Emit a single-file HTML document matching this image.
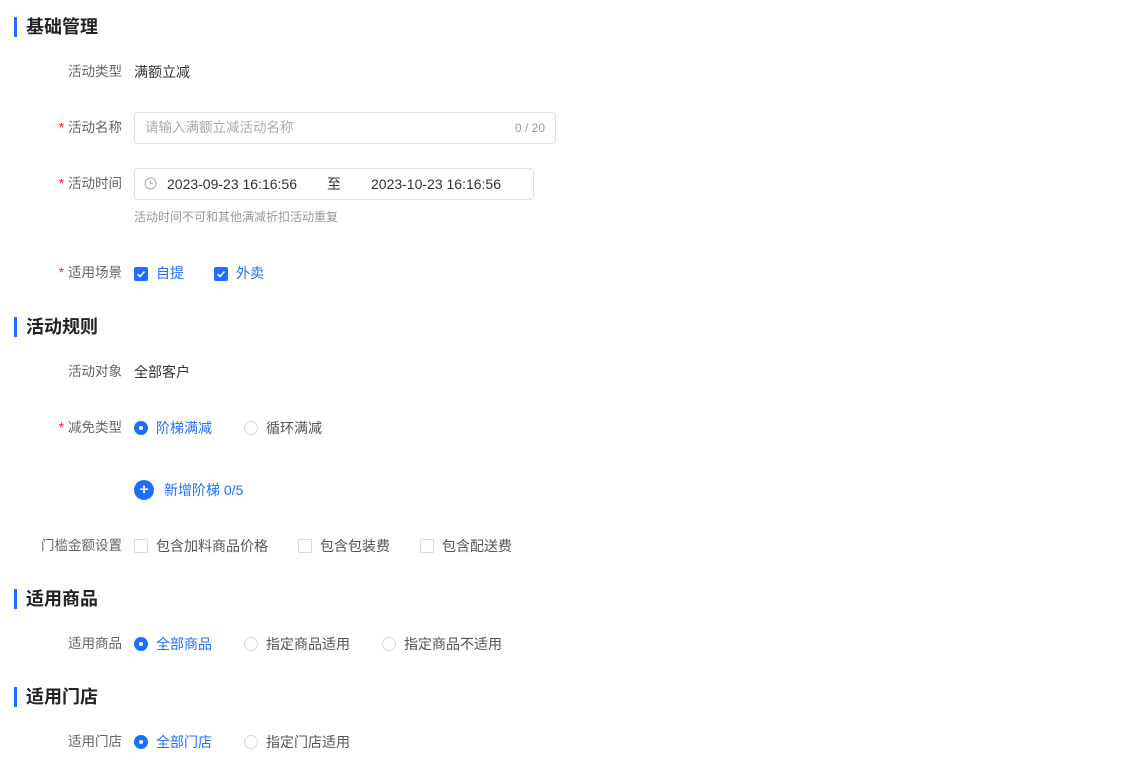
<!DOCTYPE html>
<html><head><meta charset="utf-8"><style>
*{margin:0;padding:0;box-sizing:border-box}
body{width:1127px;height:772px;background:#fff;position:relative;font-family:"Liberation Sans","Noto Sans CJK SC",sans-serif;font-size:14px;color:#333;overflow:hidden}
.a{position:absolute;white-space:nowrap;line-height:20px}
.h{position:absolute;left:14px;height:20px;border-left:3px solid #1e6fff;padding-left:9px;font-size:18px;font-weight:bold;line-height:20px;color:#222}
.l{position:absolute;right:1005px;color:#666;line-height:20px;white-space:nowrap;font-size:13.5px}
.l i{color:#f5222d;font-style:normal;margin-right:4px}
.box{position:absolute;border:1px solid #dcdfe6;border-radius:4px}
.cb{position:absolute;width:14px;height:14px;border:1px solid #d9d9d9;border-radius:2px;background:#fff}
.cb.on{background:#1e6fff;border-color:#1e6fff}
.rd{position:absolute;width:14px;height:14px;border:1px solid #d9d9d9;border-radius:50%;background:#fff}
.rd.on{background:#1e6fff;border-color:#1e6fff}
.rd.on:after{content:"";position:absolute;left:4px;top:4px;width:4px;height:4px;border-radius:50%;background:#fff}
.b{color:#1e6fff}.g{color:#555}
</style></head><body>
<div class="h" style="top:17px">基础管理</div>
<div class="l" style="top:62px">活动类型</div><div class="a" style="left:134px;top:62px">满额立减</div>
<div class="l" style="top:118px"><i>*</i>活动名称</div>
<div class="box" style="left:134px;top:112px;width:422px;height:32px"></div>
<div class="a" style="left:145px;top:118px;color:#aaa;font-size:13.5px">请输入满额立减活动名称</div>
<div class="a" style="left:515px;top:118px;color:#999;font-size:12px">0 / 20</div>
<div class="l" style="top:174px"><i>*</i>活动时间</div>
<div class="box" style="left:134px;top:168px;width:400px;height:32px"></div>
<svg style="position:absolute;left:144px;top:177px" width="13" height="13" viewBox="0 0 13 13"><circle cx="6.5" cy="6.5" r="5.5" fill="none" stroke="#aaa"/><path d="M6.5 3.5V6.8H9" fill="none" stroke="#aaa"/></svg>
<div class="a" style="left:167px;top:174px">2023-09-23 16:16:56</div>
<div class="a" style="left:327px;top:174px">至</div>
<div class="a" style="left:371px;top:174px">2023-10-23 16:16:56</div>
<div class="a" style="left:134px;top:207px;font-size:12px;color:#999">活动时间不可和其他满减折扣活动重复</div>
<div class="l" style="top:263px"><i>*</i>适用场景</div>
<div class="cb on" style="left:134px;top:267px"></div>
<svg style="position:absolute;left:134px;top:267px" width="14" height="14"><path d="M3.5 7l2.5 2.5 4.5-5" fill="none" stroke="#fff" stroke-width="1.5"/></svg>
<div class="a b" style="left:156px;top:263px">自提</div>
<div class="cb on" style="left:214px;top:267px"></div>
<svg style="position:absolute;left:214px;top:267px" width="14" height="14"><path d="M3.5 7l2.5 2.5 4.5-5" fill="none" stroke="#fff" stroke-width="1.5"/></svg>
<div class="a b" style="left:236px;top:263px">外卖</div>
<div class="h" style="top:317px">活动规则</div>
<div class="l" style="top:362px">活动对象</div><div class="a" style="left:134px;top:362px">全部客户</div>
<div class="l" style="top:418px"><i>*</i>减免类型</div>
<div class="rd on" style="left:134px;top:421px"></div><div class="a b" style="left:156px;top:418px">阶梯满减</div>
<div class="rd" style="left:244px;top:421px"></div><div class="a g" style="left:266px;top:418px">循环满减</div>
<div style="position:absolute;left:134px;top:480px;width:20px;height:20px;border-radius:50%;background:#1e6fff;color:#fff;text-align:center;line-height:19px;font-size:15px;font-weight:bold">+</div>
<div class="a b" style="left:164px;top:480px">新增阶梯 0/5</div>
<div class="l" style="top:536px">门槛金额设置</div>
<div class="cb" style="left:134px;top:539px"></div><div class="a g" style="left:156px;top:536px">包含加料商品价格</div>
<div class="cb" style="left:298px;top:539px"></div><div class="a g" style="left:320px;top:536px">包含包装费</div>
<div class="cb" style="left:420px;top:539px"></div><div class="a g" style="left:442px;top:536px">包含配送费</div>
<div class="h" style="top:589px">适用商品</div>
<div class="l" style="top:634px">适用商品</div>
<div class="rd on" style="left:134px;top:637px"></div><div class="a b" style="left:156px;top:634px">全部商品</div>
<div class="rd" style="left:244px;top:637px"></div><div class="a g" style="left:266px;top:634px">指定商品适用</div>
<div class="rd" style="left:382px;top:637px"></div><div class="a g" style="left:404px;top:634px">指定商品不适用</div>
<div class="h" style="top:687px">适用门店</div>
<div class="l" style="top:732px">适用门店</div>
<div class="rd on" style="left:134px;top:735px"></div><div class="a b" style="left:156px;top:732px">全部门店</div>
<div class="rd" style="left:244px;top:735px"></div><div class="a g" style="left:266px;top:732px">指定门店适用</div>
</body></html>
